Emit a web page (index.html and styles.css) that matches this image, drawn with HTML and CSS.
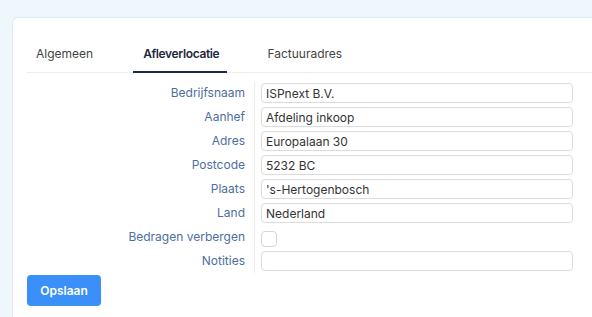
FILE: index.html
```html
<!DOCTYPE html>
<html lang="nl">
<head>
  <meta charset="UTF-8">
  <meta name="viewport" content="width=device-width, initial-scale=1.0">
  <title>Afleverlocatie</title>
  <link rel="stylesheet" href="styles.css">
</head>
<body>
  <!-- kaart -->
  <div class="card">
    <!-- tabs -->
    <div class="tabs">
      <div class="tab">Algemeen</div>
      <div class="tab active">Afleverlocatie</div>
      <div class="tab">Factuuradres</div>
    </div>
    <!-- formulier -->
    <form class="form">
      <label class="form-label">Bedrijfsnaam</label>
      <div class="form-field"><input class="input" type="text" value="ISPnext B.V."></div>
      <label class="form-label">Aanhef</label>
      <div class="form-field"><input class="input" type="text" value="Afdeling inkoop"></div>
      <label class="form-label">Adres</label>
      <div class="form-field"><input class="input" type="text" value="Europalaan 30"></div>
      <label class="form-label">Postcode</label>
      <div class="form-field"><input class="input" type="text" value="5232 BC"></div>
      <label class="form-label">Plaats</label>
      <div class="form-field"><input class="input" type="text" value="'s-Hertogenbosch"></div>
      <label class="form-label">Land</label>
      <div class="form-field"><input class="input" type="text" value="Nederland"></div>
      <label class="form-label">Bedragen verbergen</label>
      <div class="form-field"><span class="checkbox"></span></div>
      <label class="form-label">Notities</label>
      <div class="form-field"><input class="input" type="text" value=""></div>
    </form>
    <button class="btn-save" type="button">Opslaan</button>
  </div>
</body>
</html>
```

FILE: styles.css
```css
/* basis */
html, body {
  margin: 0;
  padding: 0;
  height: 100%;
  overflow: hidden;
}
body {
  background: #eef7fc;
  font-family: Inter, "Noto Sans", sans-serif;
  font-size: 12px;
  color: #333;
}
/* kaart */
.card {
  margin: 17px -20px 0 12px;
  height: calc(100vh - 17px);
  background: #fff;
  border: 1px solid #d9ebf8;
  border-bottom: 0;
  border-radius: 6px 0 0 0;
  padding: 0 0 0 14px;
  box-sizing: border-box;
  overflow: hidden;
}
/* tabs */
.tabs {
  display: flex;
  gap: 31px;
  padding-top: 28px;
  border-bottom: 1px solid #ececec;
}
.tab {
  padding: 0 9px 10px;
  font-size: 12px;
  color: #444;
  border-bottom: 2px solid transparent;
  margin-bottom: -1px;
}
.tab.active {
  padding: 0 8px 10px 10px;
  font-weight: 600;
  letter-spacing: -0.35px;
  color: #1f2740;
  border-bottom-color: #1f2b4d;
}
/* formulier */
.form {
  display: grid;
  grid-template-columns: 218px 1fr;
  column-gap: 9px;
  padding-top: 8px;
  width: 546px;
}
.form-label {
  text-align: right;
  color: #4d6e9e;
  line-height: 24px;
  height: 24px;
}
.form-field {
  border-left: 1px solid #ececec;
  padding-left: 6px;
  height: 24px;
  display: flex;
  align-items: center;
}
.input {
  width: 312px;
  height: 20px;
  box-sizing: border-box;
  border: 1px solid #dcdcdc;
  border-radius: 4px;
  padding: 0 4px;
  font-family: inherit;
  font-size: 12px;
  color: #333;
  outline: none;
}
.checkbox {
  width: 16px;
  height: 16px;
  box-sizing: border-box;
  border: 1px solid #d6d6d6;
  border-radius: 4px;
  margin-top: 3px;
}
/* knop */
.btn-save {
  margin-top: 2px;
  width: 74px;
  height: 31px;
  border: none;
  border-radius: 4px;
  background: #3b8ff9;
  color: #fff;
  font-family: inherit;
  font-size: 12px;
  font-weight: 600;
}
```
